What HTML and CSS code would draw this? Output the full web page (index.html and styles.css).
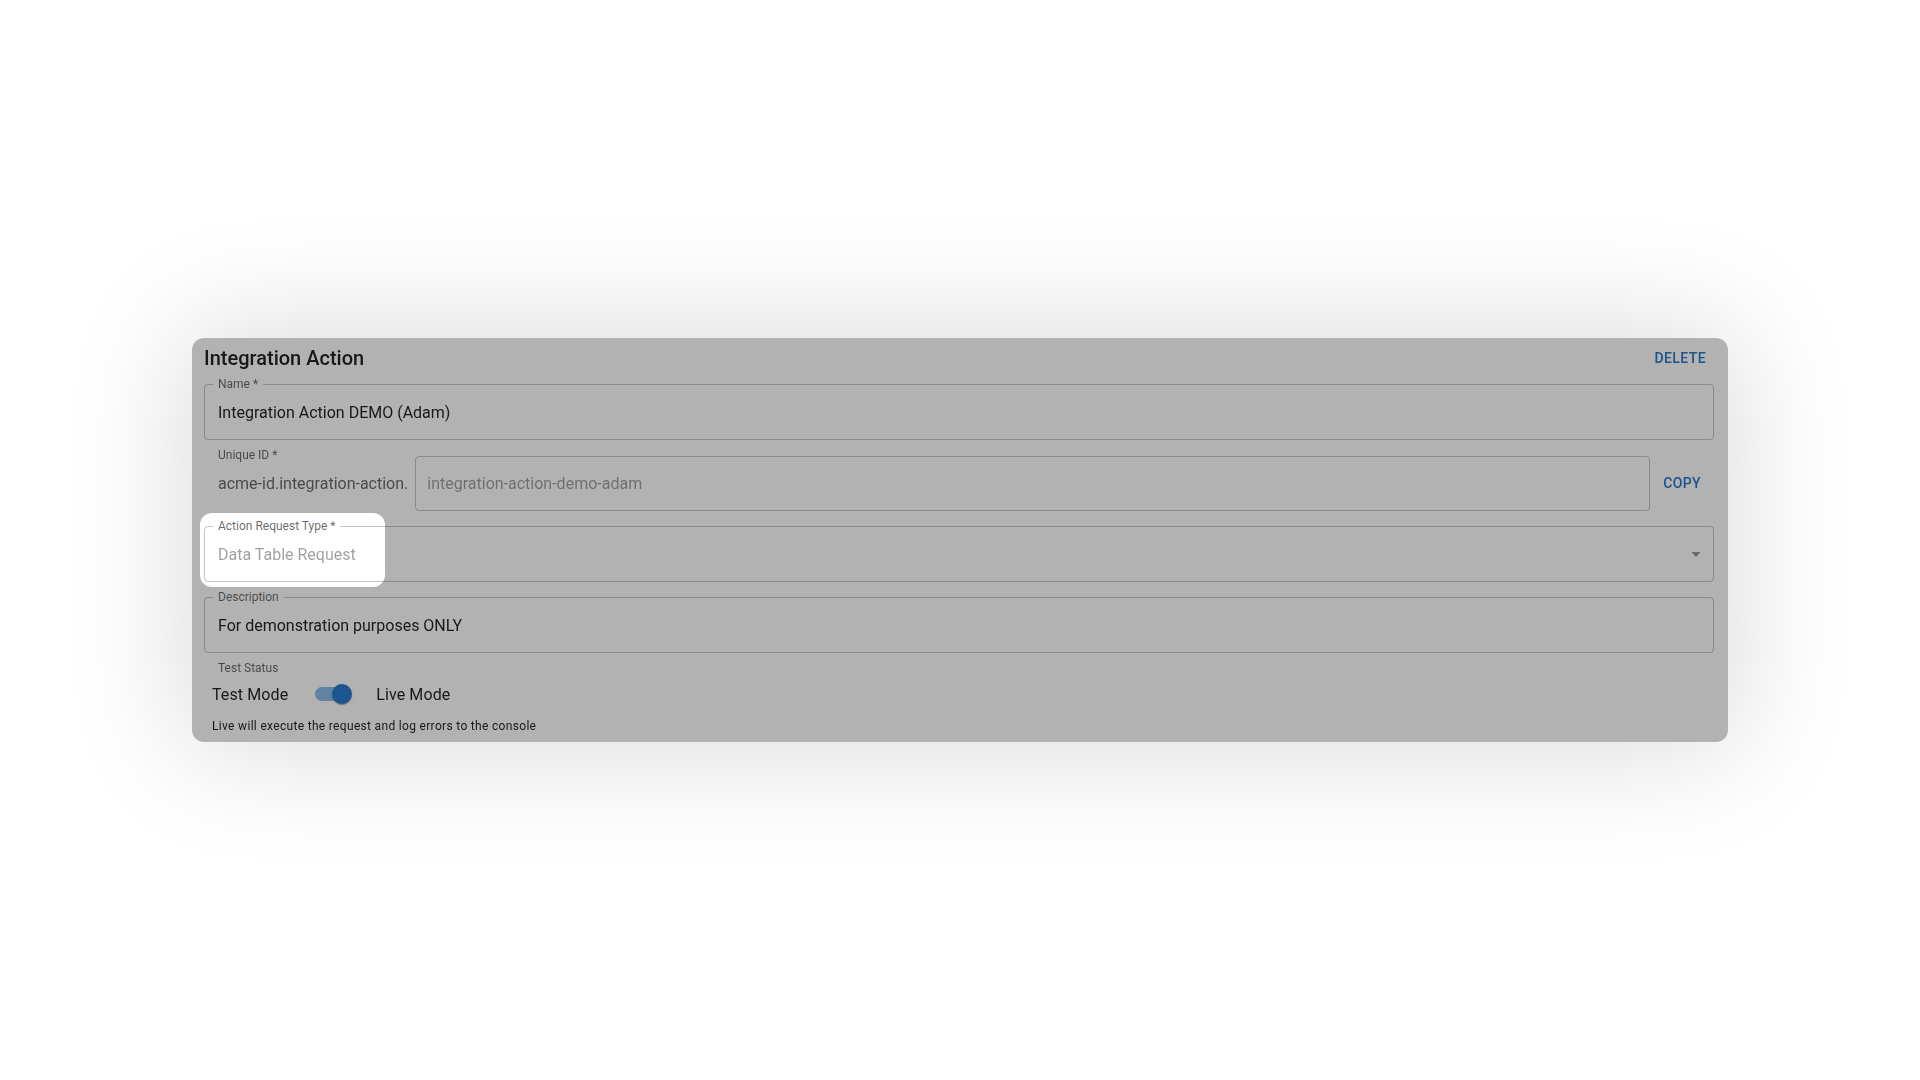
FILE: index.html
```html
<!DOCTYPE html>
<html lang="en">
<head>
    <meta charset="UTF-8">
    <meta name="viewport" content="width=device-width, initial-scale=1.0">
    <title>Integration Action</title>
    <link rel="stylesheet" href="styles.css">
</head>
<body>
    <div class="card">
        <div class="card-header">
            <h2 class="card-title">Integration Action</h2>
            <button class="text-button">Delete</button>
        </div>

        <div class="fields">
            <div class="field">
                <span class="field-label">Name *</span>
                <span class="field-value">Integration Action DEMO (Adam)</span>
            </div>

            <div class="field-group">
                <span class="group-label">Unique ID *</span>
                <span class="prefix">acme-id.integration-action.</span>
                <div class="field inner">
                    <span class="field-value muted">integration-action-demo-adam</span>
                </div>
                <button class="text-button copy">Copy</button>
            </div>

            <div class="field">
                <span class="field-label">Action Request Type *</span>
                <span class="field-value muted">Data Table Request</span>
                <svg class="select-icon" viewBox="0 0 24 24" width="24" height="24"><path d="M7.5 10l4.5 5 4.5-5z"/></svg>
            </div>

            <div class="field">
                <span class="field-label">Description</span>
                <span class="field-value">For demonstration purposes ONLY</span>
            </div>
        </div>

        <div class="status">
            <div class="status-label">Test Status</div>
            <div class="status-row">
                <span>Test Mode</span>
                <span class="switch">
                    <span class="switch-track"></span>
                    <span class="switch-thumb"></span>
                </span>
                <span>Live Mode</span>
            </div>
            <p class="helper">Live will execute the request and log errors to the console</p>
        </div>

        <!-- tour highlight over the request type field -->
        <div class="spotlight"></div>
    </div>
</body>
</html>
```

FILE: styles.css
```css
body {
    margin: 0;
    height: 100vh;
    display: flex;
    justify-content: center;
    align-items: center;
    background: #fff;
    font-family: Roboto, "Liberation Sans", Arial, sans-serif;
    color: rgba(0, 0, 0, 0.87);
}

.card {
    position: relative;
    overflow: hidden;
    box-sizing: border-box;
    width: 1536px;
    padding: 8px 14px 8px 12px;
    background: #fff;
    border-radius: 12px;
    box-shadow: 0 0 120px 10px rgba(0, 0, 0, 0.14);
    filter: blur(0.7px);
}

.card-header {
    display: flex;
    justify-content: space-between;
    align-items: center;
    height: 24px;
}

.card-title {
    margin: 0;
    font-size: 20px;
    font-weight: 500;
    line-height: 24px;
}

.text-button {
    background: none;
    border: none;
    padding: 3px 8px;
    font-family: inherit;
    font-size: 14px;
    font-weight: 500;
    line-height: 18px;
    letter-spacing: 0.4px;
    text-transform: uppercase;
    color: #2a78c8;
    cursor: pointer;
}

.fields {
    display: flex;
    flex-direction: column;
    gap: 15px;
    margin-top: 14px;
}

.field {
    position: relative;
    display: flex;
    align-items: center;
    box-sizing: border-box;
    height: 56px;
    padding: 0 13px;
    border: 1px solid rgba(0, 0, 0, 0.23);
    border-radius: 4px;
}

.field-label {
    position: absolute;
    top: -9px;
    left: 8px;
    padding: 0 5px;
    background: #fff;
    font-size: 12px;
    line-height: 16px;
    color: rgba(0, 0, 0, 0.6);
}

.field-value {
    flex: 1;
    font-size: 16px;
}

.field-value.muted {
    color: rgba(0, 0, 0, 0.38);
}

.select-icon {
    margin-right: -8px;
    fill: rgba(0, 0, 0, 0.4);
}

.field-group {
    position: relative;
    display: flex;
    align-items: center;
    height: 56px;
    padding-left: 14px;
}

.group-label {
    position: absolute;
    top: -8px;
    left: 14px;
    font-size: 12px;
    line-height: 16px;
    color: rgba(0, 0, 0, 0.6);
}

.prefix {
    margin-right: 7px;
    font-size: 16px;
    color: rgba(0, 0, 0, 0.6);
}

.field.inner {
    flex: 1;
    height: 55px;
    padding: 0 11px;
}

.text-button.copy {
    margin: 0 5px;
    padding: 6px 8px;
}

.status {
    margin: 7px 0 0 8px;
}

.status-label {
    padding-left: 6px;
    font-size: 12px;
    line-height: 16px;
    color: rgba(0, 0, 0, 0.6);
}

.status-row {
    display: flex;
    align-items: center;
    gap: 15px;
    height: 38px;
    margin-top: -1px;
    font-size: 16px;
    letter-spacing: 0.1px;
}

.switch {
    position: relative;
    box-sizing: border-box;
    width: 58px;
    height: 38px;
    padding: 12px;
}

.switch-track {
    display: block;
    width: 34px;
    height: 14px;
    border-radius: 7px;
    background: #1976d2;
    opacity: 0.5;
}

.switch-thumb {
    position: absolute;
    top: 9px;
    left: 29px;
    width: 20px;
    height: 20px;
    border-radius: 50%;
    background: #2a7ad0;
    box-shadow: 0 2px 1px -1px rgba(0, 0, 0, 0.2), 0 1px 1px rgba(0, 0, 0, 0.14), 0 1px 3px rgba(0, 0, 0, 0.12);
}

.helper {
    margin: 5px 0 0;
    font-size: 12px;
    line-height: 16px;
    letter-spacing: 0.32px;
}

.spotlight {
    position: absolute;
    left: 8px;
    top: 175px;
    width: 185px;
    height: 74px;
    border-radius: 12px;
    box-shadow: 0 0 0 2000px rgba(0, 0, 0, 0.3);
    pointer-events: none;
}
```
